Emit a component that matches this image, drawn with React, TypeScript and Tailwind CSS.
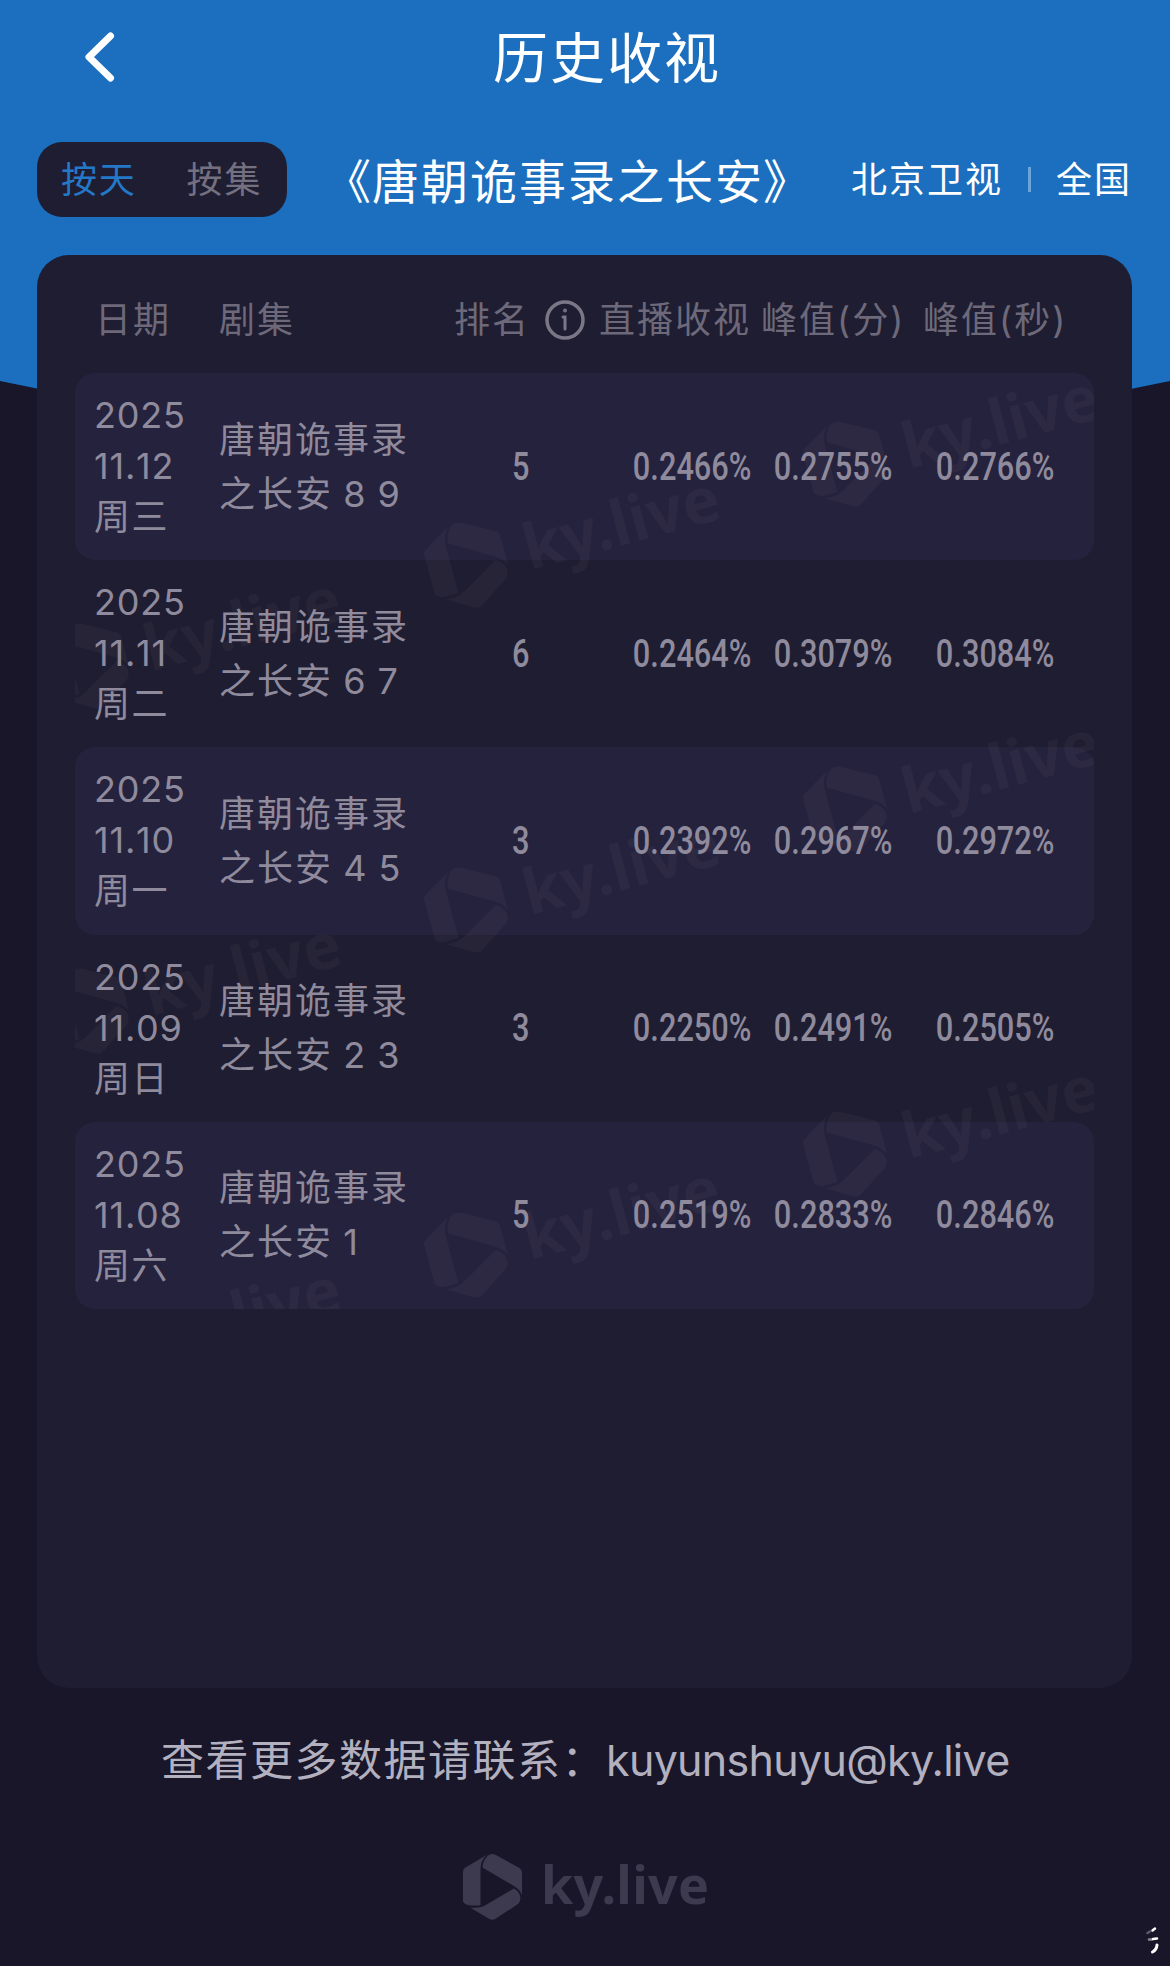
const records = [
  { date: '11.12', day: '周三', episode: '之长安 8 9', rank: 5, live: '0.2466%', peakMin: '0.2755%', peakSec: '0.2766%' },
  { date: '11.11', day: '周二', episode: '之长安 6 7', rank: 6, live: '0.2464%', peakMin: '0.3079%', peakSec: '0.3084%' },
  { date: '11.10', day: '周一', episode: '之长安 4 5', rank: 3, live: '0.2392%', peakMin: '0.2967%', peakSec: '0.2972%' },
  { date: '11.09', day: '周日', episode: '之长安 2 3', rank: 3, live: '0.2250%', peakMin: '0.2491%', peakSec: '0.2505%' },
  { date: '11.08', day: '周六', episode: '之长安 1', rank: 5, live: '0.2519%', peakMin: '0.2833%', peakSec: '0.2846%' },
];

// logo centres inside the table, the pattern repeats every 345px
const watermarks = [
  { x: 772, y: 91 },
  { x: 393, y: 192 },
  { x: 14, y: 293 },
  { x: 772, y: 436 },
  { x: 393, y: 537 },
  { x: 14, y: 638 },
  { x: 772, y: 781 },
  { x: 393, y: 882 },
  { x: 14, y: 983 },
];

function LogoMark({ className }: { className: string }) {
  return (
    <svg viewBox="0 0 59 66" fill="currentColor" className={className}>
      <path d="M0 17.500 Q0 15 2.500 13.500 L24 0.800 Q18 6 17.500 14 V51.500 H7 Q2 51 0 47.500 Z" />
      <path d="M26.500 0.500 Q29.500 -0.500 33 1 L56.500 14 Q59 15.500 59 19 V41 Q57 35.500 51 32 L19.500 13.500 Q20 5 26.500 0.500 Z" />
      <path d="M51 34.500 Q59 39.500 57 47 Q56 49.500 54 50.800 L32.500 64.800 Q29.500 66.800 26 64.800 L7 53.500 Q16 54.500 21 52 Z" />
    </svg>
  );
}

function Stat({ value }: { value: string }) {
  return (
    <div className="flex justify-end">
      <span className="inline-block origin-right scale-x-[0.81] font-['Roboto','Noto_Sans',sans-serif] text-[38px] leading-[44px] font-medium">
        {value}
      </span>
    </div>
  );
}

function Watermark() {
  return (
    <div className="absolute inset-0 overflow-hidden text-[#8f8a80]/[0.075]">
      {watermarks.map((mark) => (
        <div
          key={`${mark.x}-${mark.y}`}
          className="absolute flex h-[88px] w-[310px] origin-[40px_44px] -rotate-[15deg] items-center"
          style={{ left: mark.x - 40, top: mark.y - 44 }}
        >
          <LogoMark className="h-[88px] w-[79px] shrink-0" />
          <span className="mb-[6px] ml-[19px] font-['Noto_Sans',sans-serif] text-[63px] leading-[76px] font-bold">ky.live</span>
        </div>
      ))}
    </div>
  );
}

export default function App() {
  return (
    <div className="grid h-[1966px] w-[1170px] overflow-hidden bg-[#181628] font-['Inter','Noto_Sans_CJK_SC',sans-serif]">
      <div className="col-start-1 row-start-1 h-[500px] bg-[#1b6fbe] [clip-path:polygon(0_0,100%_0,100%_381px,50%_500px,0_381px)]" />

      <div className="z-10 col-start-1 row-start-1 flex flex-col">
        <header className="grid h-[142px] grid-cols-[180px_1fr_144px] pt-[18px]">
          <svg viewBox="0 0 40 60" fill="none" stroke="#fff" strokeWidth="7" strokeLinecap="round" strokeLinejoin="round" className="mt-[8px] ml-[79px] h-[60px] w-10">
            <path d="M31.500 10 L10 31 L31.500 52" />
          </svg>
          <h1 className="pl-[8px] text-center text-[55px] leading-[81px] tracking-[2px] text-white">历史收视</h1>
        </header>

        <div className="flex h-[75px] items-center pr-[38px] pl-[37px] text-white">
          <div className="flex h-[75px] w-[250px] items-center gap-[50px] rounded-[25px] bg-[#1f1d31] pl-[24px] text-[36px] tracking-[1.8px]">
            <span className="text-[#2478c8]">按天</span>
            <span className="text-[#747080]">按集</span>
          </div>
          <h2 className="mt-[5px] ml-[37px] text-[47px] tracking-[2px] whitespace-nowrap">
            <span className="-mr-px">《</span>唐朝诡事录之长安<span className="-ml-px">》</span>
          </h2>
          <div className="ml-auto flex items-center text-[36px] tracking-[2px] whitespace-nowrap">
            <span>北京卫视</span>
            <span className="mr-[25px] ml-[25px] h-[25px] w-[3px] bg-[#6ba6db]" />
            <span>全国</span>
          </div>
        </div>

        <main className="mt-[38px] ml-[37px] h-[1433px] w-[1095px] rounded-[32px] bg-[#1f1d31] px-[38px]">
          <div className="flex h-[118px] items-center pt-[12px] pl-[20px] text-[36px] tracking-[2px] whitespace-nowrap text-[#6d697a]">
            <span className="w-[124px]">日期</span>
            <span className="w-[235px]">剧集</span>
            <span className="w-[91px]">排名</span>
            <svg viewBox="0 0 40 40" fill="none" stroke="#7b7787" strokeWidth="3.500" strokeLinecap="round" className="mr-[14px] h-10 w-10">
              <circle cx="20" cy="20" r="18" />
              <path d="M18 17 H20 V29" strokeWidth="3" />
              <circle cx="20" cy="10.500" r="1.200" strokeWidth="1.500" />
            </svg>
            <span className="w-[162px]">直播收视</span>
            <span className="w-[162px]">峰值(分)</span>
            <span>峰值(秒)</span>
          </div>

          <div className="relative">
            <div>
              {records.map((record, i) => (
                <div key={record.date} className={`h-[187.2px] rounded-[20px] ${i % 2 === 0 ? 'bg-[#25223e]' : ''}`} />
              ))}
            </div>
            <Watermark />
            <div className="absolute inset-0 text-[#8f8b9d]">
              {records.map((record) => (
                <div key={record.date} className="grid h-[187.2px] grid-cols-[124px_217px_171px_146px_141px_162px] items-center pl-[19px]">
                  <div className="text-[36px] leading-[51px] tracking-[0.800px] [font-kerning:none]">
                    <div>2025</div>
                    <div>{record.date}</div>
                    <div className="tracking-[1.500px]">{record.day}</div>
                  </div>
                  <div className="pl-px text-[36px] leading-[54px] tracking-[2px] whitespace-nowrap">
                    <div>唐朝诡事录</div>
                    <div className="[word-spacing:-2px]">{record.episode}</div>
                  </div>
                  <div className="flex justify-center">
                    <span className="inline-block scale-x-[0.81] font-['Roboto','Noto_Sans',sans-serif] text-[38px] leading-[44px] font-medium">{record.rank}</span>
                  </div>
                  <Stat value={record.live} />
                  <Stat value={record.peakMin} />
                  <Stat value={record.peakSec} />
                </div>
              ))}
            </div>
          </div>
        </main>

        <footer className="flex flex-1 flex-col text-[#b3b0bf]">
          <p className="mt-[40px] ml-[161px] text-[43px] leading-[64px] tracking-[1.500px] whitespace-nowrap">
            查看更多数据请联系：<span className="tracking-[-0.700px]">kuyunshuyu@ky.live</span>
          </p>
          <div className="mt-[62px] ml-[463px] flex h-[66px] items-center text-[#3d394e]">
            <LogoMark className="h-[66px] w-[59px]" />
            <span className="mb-[6px] ml-[19px] font-['Noto_Sans',sans-serif] text-[52px] leading-[60px] font-bold tracking-[0.300px]">ky.live</span>
          </div>
          <svg viewBox="0 0 16 30" fill="none" stroke="#fff" strokeWidth="2.500" strokeLinecap="round" className="mt-auto mr-[9px] mb-[11px] h-[30px] w-4 self-end">
            <path d="M7.500 5.500 L10 3.500" />
            <path d="M2.500 8 L5 6.500" strokeOpacity="0.300" />
            <path d="M4 14.500 H7" strokeOpacity="0.500" />
            <path d="M8 14 L12 13.500" />
            <path d="M12 20 Q11.500 25 7.500 27" strokeWidth="3" />
          </svg>
        </footer>
      </div>
    </div>
  );
}
